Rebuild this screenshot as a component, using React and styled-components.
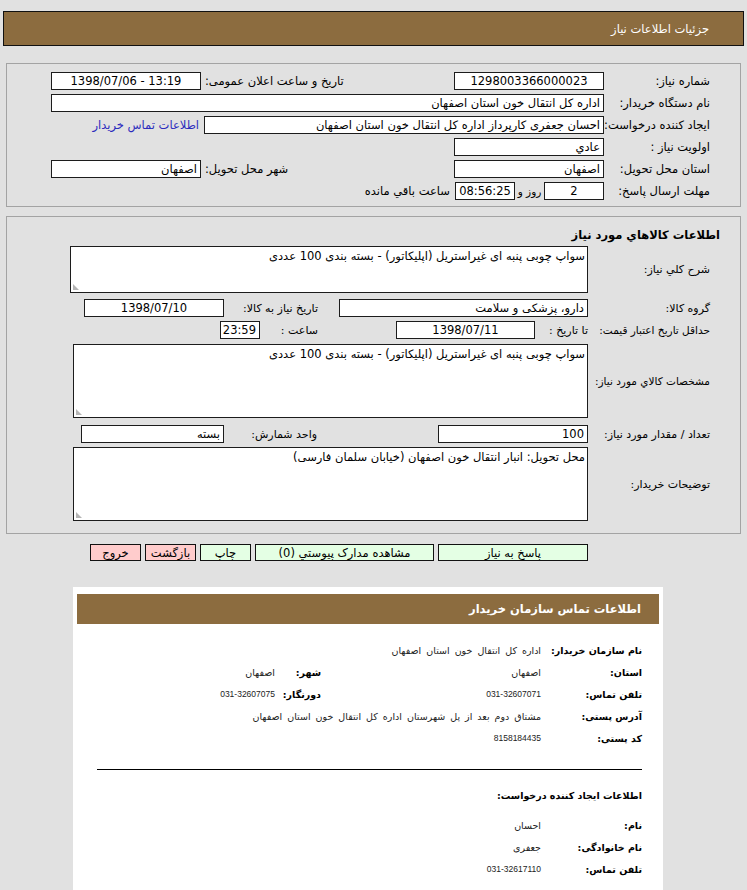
import React from "react";
import styled, { createGlobalStyle } from "styled-components";

const GlobalStyle = createGlobalStyle`
  body {
    margin: 0;
    background: #e1e1e1;
    font-family: "DejaVu Sans", "Liberation Sans", sans-serif;
    color: #000;
  }
`;

const Page = styled.div`
  direction: rtl;
  padding: 11px 3px 0;
  font-size: 11.5px;
`;

const PageHeader = styled.div`
  height: 35px;
  box-sizing: border-box;
  background: #8c6c3f;
  border: 1px solid #111;
  color: #fff;
  display: flex;
  align-items: center;
  padding-right: 34px;
  font-size: 11.5px;
`;

const Panel = styled.div`
  margin: ${(p) => p.$top}px 3px 0;
  border: 1px solid #a3a3a3;
  padding: ${(p) => p.$pad};
  display: flex;
  flex-direction: column;
`;

const Row = styled.div`
  display: flex;
  align-items: center;
  height: ${(p) => p.$h || 22}px;
  margin-top: ${(p) => p.$mt || 0}px;
`;

const Label = styled.div`
  flex: none;
  width: ${(p) => p.$w}px;
  font-size: ${(p) => p.$fs || 11.5}px;
  white-space: nowrap;
`;

const Text = styled.span`
  flex: none;
  display: flex;
  justify-content: ${(p) => (p.$center ? "center" : "flex-start")};
  box-sizing: border-box;
  white-space: nowrap;
  margin: 0 ${(p) => p.$mr || 0}px 0 ${(p) => p.$ml || 0}px;
  width: ${(p) => (p.$w ? `${p.$w}px` : "auto")};
  padding-right: ${(p) => p.$pr || 0}px;
  font-size: ${(p) => p.$fs || 11.5}px;
`;

const Spacer = styled.div`
  flex: 1;
`;

const Field = styled.div`
  flex: ${(p) => (p.$grow ? 1 : "none")};
  width: ${(p) => (p.$w ? `${p.$w}px` : "auto")};
  height: ${(p) => p.$h || 18}px;
  box-sizing: border-box;
  background: #fff;
  border: 1px solid #1c1c1c;
  padding: 0 3px;
  line-height: 16px;
  text-align: ${(p) => p.$align || "right"};
  direction: ${(p) => (p.$ltr ? "ltr" : "rtl")};
  white-space: nowrap;
  overflow: hidden;
`;

const Area = styled.div`
  position: relative;
  flex: none;
  width: ${(p) => p.$w}px;
  height: ${(p) => p.$h}px;
  box-sizing: border-box;
  background: #fff;
  border: 1px solid #1c1c1c;
  padding: 1px 2px;
  line-height: 16px;
`;

const Grip = styled.span`
  position: absolute;
  left: 2px;
  bottom: 2px;
  width: 6px;
  height: 6px;
  background-image: radial-gradient(circle, #b5b5b5 0.8px, transparent 1px);
  background-size: 2px 2px;
  clip-path: polygon(0 0, 0 100%, 100% 100%);
`;

const Link = styled.a`
  color: #2b2bbd;
  text-decoration: none;
  margin-right: 5px;
  white-space: nowrap;
`;

const Title = styled.div`
  font-weight: bold;
  height: 18px;
  line-height: 18px;
  margin: 1px -10px 0 0;
`;

const ButtonBar = styled.div`
  display: flex;
  gap: 4px;
  padding-right: 156px;
  margin-top: 10px;
`;

const Button = styled.button`
  font: inherit;
  width: ${(p) => p.$w}px;
  height: 17px;
  padding: 0;
  line-height: 14px;
  border: 1px solid #111;
  background: ${(p) => (p.$tone === "red" ? "#ffcccc" : "#e4ffe4")};
  color: #000;
  direction: rtl;
`;

const Card = styled.div`
  background: #fff;
  margin: 26px 81px 0 70px;
  padding: 7px 4px 24px;
  font-size: 9.5px;
`;

const CardHeader = styled.div`
  height: 30px;
  background: #8c6c3f;
  color: #fff;
  font-weight: bold;
  font-size: 11.5px;
  display: flex;
  align-items: center;
  padding-right: 18px;
`;

const CardBody = styled.div`
  padding: 15px 17px 0 17px;
`;

const InfoRow = styled.div`
  display: flex;
  align-items: center;
  height: 22px;
  margin-top: ${(p) => p.$mt || 0}px;
`;

const InfoLabel = styled.div`
  flex: none;
  width: ${(p) => p.$w}px;
  font-weight: bold;
  font-size: 9.5px;
  white-space: nowrap;
`;

const InfoValue = styled.div`
  flex: none;
  width: ${(p) => (p.$w ? `${p.$w}px` : "auto")};
  color: #222;
  white-space: nowrap;
  word-spacing: 2px;
  font-family: ${(p) => (p.$num ? '"Liberation Sans", sans-serif' : "inherit")};
  font-size: ${(p) => (p.$num ? "8.5px" : "9.5px")};
`;

const Divider = styled.hr`
  border: none;
  border-top: 1px solid #000;
  margin: 20px 0 0 3px;
`;

const SectionTitle = styled.div`
  font-weight: bold;
  font-size: 9.5px;
  height: 22px;
  line-height: 22px;
  margin-top: 15px;
`;

const buyerInfo = [
  ["نام سازمان خریدار:", "اداره کل انتقال خون استان اصفهان"],
  ["استان:", "اصفهان", "شهر:", "اصفهان"],
  ["تلفن تماس:", "031-32607071", "دورنگار:", "031-32607075"],
  ["آدرس پستی:", "مشتاق دوم بعد از پل شهرستان  اداره کل انتقال خون استان اصفهان"],
  ["کد پستی:", "8158184435"],
];

const creatorInfo = [
  ["نام:", "احسان"],
  ["نام خانوادگی:", "جعفری"],
  ["تلفن تماس:", "031-32617110"],
];

const isNum = (s) => /^[0-9-]+$/.test(s);

function InfoLines({ rows, first = 0 }) {
  return rows.map((r, i) => (
    <InfoRow key={i} $mt={i === 0 ? first : 0}>
      <InfoLabel $w={101}>{r[0]}</InfoLabel>
      <InfoValue $w={r[2] ? 220 : 0} $num={isNum(r[1])}>
        {r[1]}
      </InfoValue>
      {r[2] && <InfoLabel $w={46}>{r[2]}</InfoLabel>}
      {r[3] && <InfoValue $num={isNum(r[3])}>{r[3]}</InfoValue>}
    </InfoRow>
  ));
}

export default function App() {
  return (
    <>
      <GlobalStyle />
      <Page>
        <PageHeader>جزئیات اطلاعات نیاز</PageHeader>

        <Panel $top={17} $pad="6px 30px 4px 44px">
          <Row>
            <Label $w={106}>شماره نیاز:</Label>
            <Field $w={150} $align="center">1298003366000023</Field>
            <Spacer />
            <Text $ml={4}>تاریخ و ساعت اعلان عمومی:</Text>
            <Field $w={150} $align="center" $ltr>1398/07/06 - 13:19</Field>
          </Row>
          <Row>
            <Label $w={106}>نام دستگاه خریدار:</Label>
            <Field $grow>اداره کل انتقال خون استان اصفهان</Field>
          </Row>
          <Row>
            <Label $w={106}>ایجاد کننده درخواست:</Label>
            <Field $w={400}>احسان جعفری کارپرداز اداره کل انتقال خون استان اصفهان</Field>
            <Link href="#">اطلاعات تماس خریدار</Link>
          </Row>
          <Row>
            <Label $w={106}>اولویت نیاز :</Label>
            <Field $w={150}>عادي</Field>
          </Row>
          <Row>
            <Label $w={106}>استان محل تحویل:</Label>
            <Field $w={150}>اصفهان</Field>
            <Spacer />
            <Text $ml={4}>شهر محل تحویل:</Text>
            <Field $w={150}>اصفهان</Field>
          </Row>
          <Row>
            <Label $w={106}>مهلت ارسال پاسخ:</Label>
            <Field $w={60} $align="center">2</Field>
            <Text $w={29} $center $fs={10.5}>روز و</Text>
            <Field $w={60} $align="center">08:56:25</Field>
            <Text $mr={5}>ساعت باقي مانده</Text>
          </Row>
        </Panel>

        <Panel $top={9} $pad="8px 30px 12px 20px">
          <Title>اطلاعات کالاهاي مورد نیاز</Title>
          <Row $h={47} $mt={2}>
            <Label $w={122} $fs={11}>شرح کلي نیاز:</Label>
            <Area $w={518} $h={47}>
              سواپ چوبی پنبه ای غیراستریل (اپلیکاتور) - بسته بندی 100 عددی
              <Grip />
            </Area>
          </Row>
          <Row $mt={4}>
            <Label $w={122} $fs={11}>گروه کالا:</Label>
            <Field $w={249}>دارو، پزشکی و سلامت</Field>
            <Text $w={115} $pr={21} $fs={11}>تاریخ نیاز به کالا:</Text>
            <Field $w={140} $align="center">1398/07/10</Field>
          </Row>
          <Row>
            <Label $w={122} $fs={10.5}>حداقل تاریخ اعتبار قیمت:</Label>
            <Text $w={53} $fs={11}>تا تاریخ :</Text>
            <Field $w={139} $align="center">1398/07/11</Field>
            <Text $w={136} $pr={78} $fs={11}>ساعت :</Text>
            <Field $w={40} $align="center">23:59</Field>
          </Row>
          <Row $h={74} $mt={3}>
            <Label $w={122} $fs={10.5}>مشخصات کالاي مورد نیاز:</Label>
            <Area $w={515} $h={74}>
              سواپ چوبی پنبه ای غیراستریل (اپلیکاتور) - بسته بندی 100 عددی
              <Grip />
            </Area>
          </Row>
          <Row $mt={5}>
            <Label $w={122} $fs={11}>تعداد / مقدار مورد نیاز:</Label>
            <Field $w={150}>100</Field>
            <Text $w={214} $pr={121} $fs={11}>واحد شمارش:</Text>
            <Field $w={143}>بسته</Field>
          </Row>
          <Row $h={74} $mt={2}>
            <Label $w={122} $fs={11}>توضیحات خریدار:</Label>
            <Area $w={515} $h={74}>
              محل تحویل: انبار انتقال خون اصفهان (خیابان سلمان فارسی)
              <Grip />
            </Area>
          </Row>
        </Panel>

        <ButtonBar>
          <Button $w={150}>پاسخ به نیاز</Button>
          <Button $w={179}>مشاهده مدارک پیوستي (0)</Button>
          <Button $w={51}>چاپ</Button>
          <Button $w={51} $tone="red">بازگشت</Button>
          <Button $w={51} $tone="red">خروج</Button>
        </ButtonBar>

        <Card>
          <CardHeader>اطلاعات تماس سازمان خریدار</CardHeader>
          <CardBody>
            <InfoLines rows={buyerInfo} />
            <Divider />
            <SectionTitle>اطلاعات ایجاد کننده درخواست:</SectionTitle>
            <InfoLines rows={creatorInfo} first={7} />
          </CardBody>
        </Card>
      </Page>
    </>
  );
}
